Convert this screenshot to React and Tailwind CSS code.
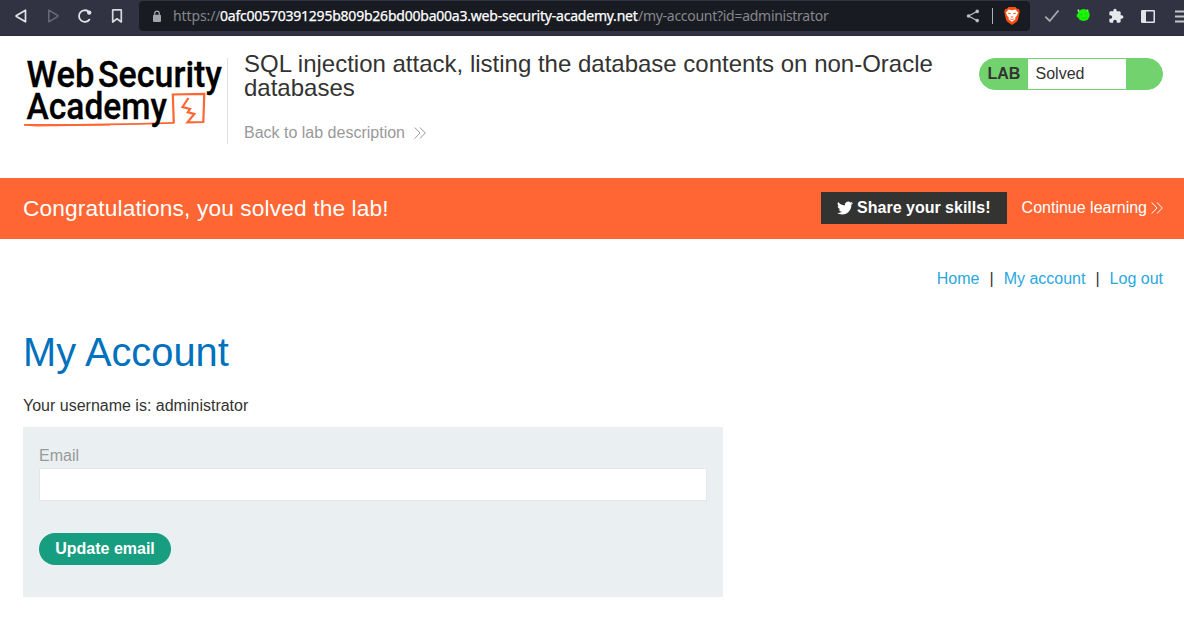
import React from "react";

function BackIcon() {
  return (
    <svg width="14" height="16" viewBox="0 0 14 16" fill="none" stroke="#e4e4e6" strokeWidth="1.7" strokeLinejoin="round">
      <path d="M10.5 2.2V13.8L1.5 8.6Q.8 8 1.5 7.4Z" />
    </svg>
  );
}

function ForwardIcon() {
  return (
    <svg width="14" height="16" viewBox="0 0 14 16" fill="none" stroke="#696b77" strokeWidth="1.5" strokeLinejoin="round">
      <path d="M1.8 2.2V13.8L10.6 8.6Q11.3 8 10.6 7.4Z" />
    </svg>
  );
}

function ReloadIcon() {
  return (
    <svg width="16" height="16" viewBox="0 0 16 16" fill="none" stroke="#e4e4e6" strokeWidth="1.8" strokeLinecap="round">
      <path d="M12.4 11.6A5.8 5.8 0 1 1 11.4 3.5" />
      <circle cx="12.2" cy="4.6" r="2.2" fill="#e4e4e6" stroke="none" />
    </svg>
  );
}

function BookmarkIcon() {
  return (
    <svg width="12" height="16" viewBox="0 0 12 16" fill="none" stroke="#d8d9dc" strokeWidth="1.7" strokeLinejoin="round">
      <path d="M1.7 2Q1.7 1.8 2.2 1.8H9.8Q10.3 1.8 10.3 2.3V14L6 10.8L1.7 14Z" />
    </svg>
  );
}

function LockIcon() {
  return (
    <svg width="10" height="13" viewBox="0 0 10 13">
      <rect x="1" y="4.8" width="8" height="7.2" rx="1" fill="#a3a5ab" />
      <path d="M2.7 5.5V3.5a2.3 2.3 0 0 1 4.6 0V5.5" fill="none" stroke="#a3a5ab" strokeWidth="1.2" />
    </svg>
  );
}

function ShareIcon() {
  return (
    <svg width="14" height="14" viewBox="0 0 14 14" fill="#bdbec2">
      <path d="M11 2.5L2.5 7L11 11.5" fill="none" stroke="#bdbec2" strokeWidth="1.2" />
      <circle cx="11.2" cy="2.4" r="1.8" />
      <circle cx="2.5" cy="7" r="1.8" />
      <circle cx="11.2" cy="11.6" r="1.8" />
    </svg>
  );
}

function BraveIcon() {
  return (
    <svg width="16" height="18" viewBox="0 0 16 18">
      <path d="M4.6 0H11.4L13 1.7L14.8 2L15.8 4.5L15.2 7L14 12.6Q13.5 14.2 12 15.3L8 18L4 15.3Q2.5 14.2 2 12.6L.8 7L.2 4.5L1.2 2L3 1.7Z" fill="#fb4f10" />
      <path d="M4.5 2.6L8 3.3L11.5 2.6L14 5.5L13 8.5L11.2 10.5L11.4 12.3L8 14.8L4.600 12.300L4.800 10.500L3 8.500L2 5.500Z" fill="#fff" />
      <path d="M4 5.700L6.800 6.300L6.400 7.300L4.600 7ZM12 5.700L9.200 6.300L9.600 7.300L11.400 7ZM6.500 9.900L8 9.200L9.500 9.900L8 10.800Z" fill="#fb4f10" />
      <path d="M5.800 11.800L8 12.600L10.200 11.800" fill="none" stroke="#fb4f10" strokeWidth=".7" />
    </svg>
  );
}

function CheckIcon() {
  return (
    <svg width="16" height="14" viewBox="0 0 16 14" fill="none" stroke="#a9abae" strokeWidth="1.8">
      <path d="M1.3 7.7L5.7 12L14.5 1.5" />
    </svg>
  );
}

function BlobIcon() {
  return (
    <svg width="15" height="14" viewBox="0 0 15 14">
      <circle cx="7.6" cy="7" r="6.1" fill="#19f500" />
      <path d="M.6 6.800L2.500 6L3 10L.8 9Z" fill="#19f500" />
      <path d="M1.500 1.500L3.400 1.800L2.800 3.400L2 4.200ZM10.500 1L12.600 2.600L12 4Z" fill="#c9f7c9" />
      <path d="M4.500 6.300L6 6.800M9 6L10.500 5.700" stroke="#0fae0c" strokeWidth=".8" />
      <path d="M5.500 10Q8 11 10.500 9.500" fill="none" stroke="#0fc50c" strokeWidth=".7" />
    </svg>
  );
}

function PuzzleIcon() {
  return (
    <svg width="16" height="16" viewBox="0 0 24 24" fill="#e8e8ea">
      <path d="M20.5 11H19V7c0-1.100-.9-2-2-2h-4V3.500C13 2.120 11.880 1 10.500 1S8 2.120 8 3.500V5H4c-1.100 0-1.990.9-1.990 2v3.800H3.500c1.490 0 2.700 1.210 2.700 2.700s-1.210 2.700-2.700 2.700H2V20c0 1.100.9 2 2 2h3.800v-1.500c0-1.490 1.210-2.700 2.700-2.700s2.700 1.210 2.700 2.700V22H17c1.100 0 2-.9 2-2v-4h1.500c1.380 0 2.500-1.120 2.500-2.500S21.880 11 20.500 11z" />
    </svg>
  );
}

function SidebarIcon() {
  return (
    <svg width="14" height="13" viewBox="0 0 14 13">
      <rect x=".75" y=".75" width="12.5" height="11.500" rx=".5" fill="none" stroke="#e4e4e6" strokeWidth="1.500" />
      <rect x="1" y="1" width="4" height="11" fill="#e4e4e6" />
    </svg>
  );
}

function MenuIcon() {
  return (
    <svg width="9" height="13" viewBox="0 0 9 13" stroke="#c4c5c9" strokeWidth="2">
      <path d="M0 1.500H9M0 6.500H9M0 11.500H9" />
    </svg>
  );
}

function TwitterIcon() {
  return (
    <svg width="16" height="16" viewBox="0 0 24 24" fill="#fff">
      <path d="M23.953 4.570a10 10 0 0 1-2.825.775 4.958 4.958 0 0 0 2.163-2.723c-.951.555-2.005.959-3.127 1.184a4.920 4.920 0 0 0-8.384 4.482C7.690 8.095 4.067 6.130 1.640 3.162a4.822 4.822 0 0 0-.666 2.475c0 1.710.870 3.213 2.188 4.096a4.904 4.904 0 0 1-2.228-.616v.060a4.923 4.923 0 0 0 3.946 4.827 4.996 4.996 0 0 1-2.212.085 4.936 4.936 0 0 0 4.604 3.417 9.867 9.867 0 0 1-6.102 2.105c-.390 0-.779-.023-1.170-.067a13.995 13.995 0 0 0 7.557 2.209c9.053 0 13.998-7.496 13.998-13.985 0-.210 0-.420-.015-.630A9.935 9.935 0 0 0 24 4.590z" />
    </svg>
  );
}

function Chevrons({ color }) {
  return (
    <svg width="12" height="12" viewBox="0 0 12 12" fill="none" stroke={color} strokeWidth="1">
      <path d="M.7.500L6 6L.7 11.500M6 .500L11.300 6L6 11.500" />
    </svg>
  );
}

function Logo() {
  return (
    <svg className="overflow-visible" width="204" height="86" viewBox="23 58 204 86">
      <g fill="none" stroke="#ff6633">
        <path d="M24 124.900Q95 125.300 173.500 122.800" strokeWidth="1.800" />
        <path d="M26 125L36 125.800L110 125" strokeWidth="1.200" />
        <path d="M173.800 123.500L172.800 94.500L204.300 93.800L203.300 122L187.500 122.300L194.300 114L187.800 112.300L190 109L182.500 107L188.500 98" strokeWidth="2.200" />
      </g>
      <g fill="#000" stroke="#000" strokeWidth=".3" fontFamily="Roboto, sans-serif" fontWeight="500" fontSize="37.6">
        <text x="26.600" y="86.800" textLength="68" lengthAdjust="spacingAndGlyphs">Web</text>
        <text x="98" y="86.800" textLength="124" lengthAdjust="spacingAndGlyphs">Security</text>
        <text x="26.500" y="119.200" textLength="140.500" lengthAdjust="spacingAndGlyphs">Academy</text>
      </g>
    </svg>
  );
}

function BrowserBar() {
  return (
    <header className="flex h-9 items-start overflow-hidden border-b border-[#292b38] bg-[#313342]">
      <div className="flex h-8 w-[139px] shrink-0 items-center pl-[15px]">
        <div className="w-8"><BackIcon /></div>
        <div className="w-[30px]"><ForwardIcon /></div>
        <div className="w-[34px]"><ReloadIcon /></div>
        <BookmarkIcon />
      </div>
      <div className="mt-px flex h-[30px] w-[891px] shrink-0 items-center rounded bg-[#191b22] pl-[13px]">
        <LockIcon />
        <div className="ml-[11px] flex whitespace-pre font-['Noto_Sans',sans-serif] text-[14px] leading-[30px] text-[#85878c]">
          <span className="w-[47px] tracking-[-0.1px]">https://</span>
          <span className="w-[418px] text-white [-webkit-text-stroke:0.25px_#fff] tracking-[-0.22px]">0afc00570391295b809b26bd00ba00a3.web-security-academy.net</span>
          <span className="w-[190px] tracking-[-0.28px]">/my-account?id=administrator</span>
        </div>
        <div className="ml-[138px]"><ShareIcon /></div>
        <div className="ml-3 h-4 w-px bg-[#b0b1b5]" />
        <div className="ml-[11px]"><BraveIcon /></div>
      </div>
      <div className="flex h-8 shrink-0 items-center pl-[14px]">
        <CheckIcon />
        <div className="mb-0.5 ml-4"><BlobIcon /></div>
        <div className="ml-[17px]"><PuzzleIcon /></div>
        <div className="ml-[17px]"><SidebarIcon /></div>
        <div className="ml-5"><MenuIcon /></div>
      </div>
    </header>
  );
}

function LabHeader() {
  return (
    <section className="flex h-[142px] items-start pl-[23px] pr-[21px] pt-[22px]">
      <div className="h-[86px] w-[205px] shrink-0 border-r border-[#e0e0e0]"><Logo /></div>
      <div className="-mt-1.5 ml-4 w-[700px]">
        <h2 className="text-[24px] leading-6">SQL injection attack, listing the database contents on non-Oracle databases</h2>
        <a className="mt-[21px] flex items-center gap-[9px] leading-6 text-[#999]">
          Back to lab description <Chevrons color="#999" />
        </a>
      </div>
      <div className="ml-auto flex h-8 w-[184px] items-stretch overflow-hidden rounded-full border border-[#72d26e] bg-[#72d26e] leading-[30px]">
        <span className="w-12 pl-[7.5px] font-bold">LAB</span>
        <span className="w-[98px] bg-white pl-[7.5px]">Solved</span>
      </div>
    </section>
  );
}

export default function App() {
  return (
    <div className="h-[620px] overflow-hidden bg-white font-['Liberation_Sans',Arial,sans-serif] text-base text-[#333332]">
      <BrowserBar />
      <LabHeader />
      <section className="flex h-[61px] items-start bg-[#ff6633] pl-[23px] pr-[21px] pt-[14px] leading-8 text-white">
        <h3 className="text-[22.7px] tracking-[0.14px]">Congratulations, you solved the lab!</h3>
        <button className="ml-auto flex h-8 w-[186px] items-center gap-1 bg-[#333332] pl-4 font-bold">
          <TwitterIcon /> Share your skills!
        </button>
        <a className="ml-[14.5px] flex items-center gap-1">Continue learning <Chevrons color="#fff" /></a>
      </section>
      <main className="px-[23px]">
        <nav className="-mr-0.5 flex justify-end gap-[10px] pt-7 leading-6 text-[#29a7df]">
          <a>Home</a><span className="text-[#333332]">|</span><a>My account</a><span className="text-[#333332]">|</span><a>Log out</a>
        </nav>
        <h1 className="mt-[35px] text-[39.8px] leading-[52px] text-[#0071bc]">My Account</h1>
        <p className="mt-4 leading-6">Your username is: administrator</p>
        <form className="mt-[9px] h-[170px] w-[700px] bg-[#eaf0f2] px-4 pt-[17px]">
          <label className="block leading-6 text-[#999]">Email</label>
          <input className="block h-[33px] w-full border border-[#e4e6e8] bg-white" />
          <button type="button" className="mt-8 h-8 w-[132px] rounded-full bg-[#179d80] font-bold text-white">Update email</button>
        </form>
      </main>
    </div>
  );
}
